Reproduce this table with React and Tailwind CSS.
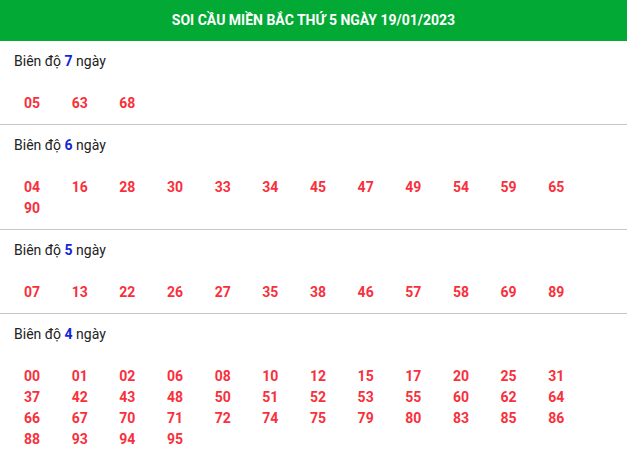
const sections = [
  { days: 7, nums: ["05", "63", "68"] },
  {
    days: 6,
    nums: ["04", "16", "28", "30", "33", "34", "45", "47", "49", "54", "59", "65", "90"],
  },
  {
    days: 5,
    nums: ["07", "13", "22", "26", "27", "35", "38", "46", "57", "58", "69", "89"],
  },
  {
    days: 4,
    nums: [
      "00", "01", "02", "06", "08", "10", "12", "15", "17", "20", "25", "31",
      "37", "42", "43", "48", "50", "51", "52", "53", "55", "60", "62", "64",
      "66", "67", "70", "71", "72", "74", "75", "79", "80", "83", "85", "86",
      "88", "93", "94", "95",
    ],
  },
];

function Section({ days, nums, last }) {
  return (
    <div className={`pt-[10px] pb-[10px] ${last ? "" : "border-b border-[#c6c6c6]"}`}>
      <div className="h-5 leading-5 px-[14px] text-[14px] text-[#222]">
        Biên độ <span className="font-bold text-[#1226d6]">{days}</span> ngày
      </div>
      <div className="mt-[22px] pl-[24px] grid grid-cols-[repeat(12,47.67px)] text-[14px] leading-[21px] font-bold text-[#f8303c]">
        {nums.map((n) => (
          <span key={n}>{n}</span>
        ))}
      </div>
    </div>
  );
}

export default function App() {
  return (
    <div className="w-[627px] h-[461px] bg-white overflow-hidden font-['Roboto',sans-serif]">
      <div className="h-[41px] bg-[#02a935] flex items-center justify-center">
        <h1 className="text-white font-bold text-[14px]">
          SOI CẦU MIỀN BẮC THỨ 5 NGÀY 19/01/2023
        </h1>
      </div>
      {sections.map((s, i) => (
        <Section key={s.days} {...s} last={i === sections.length - 1} />
      ))}
    </div>
  );
}
